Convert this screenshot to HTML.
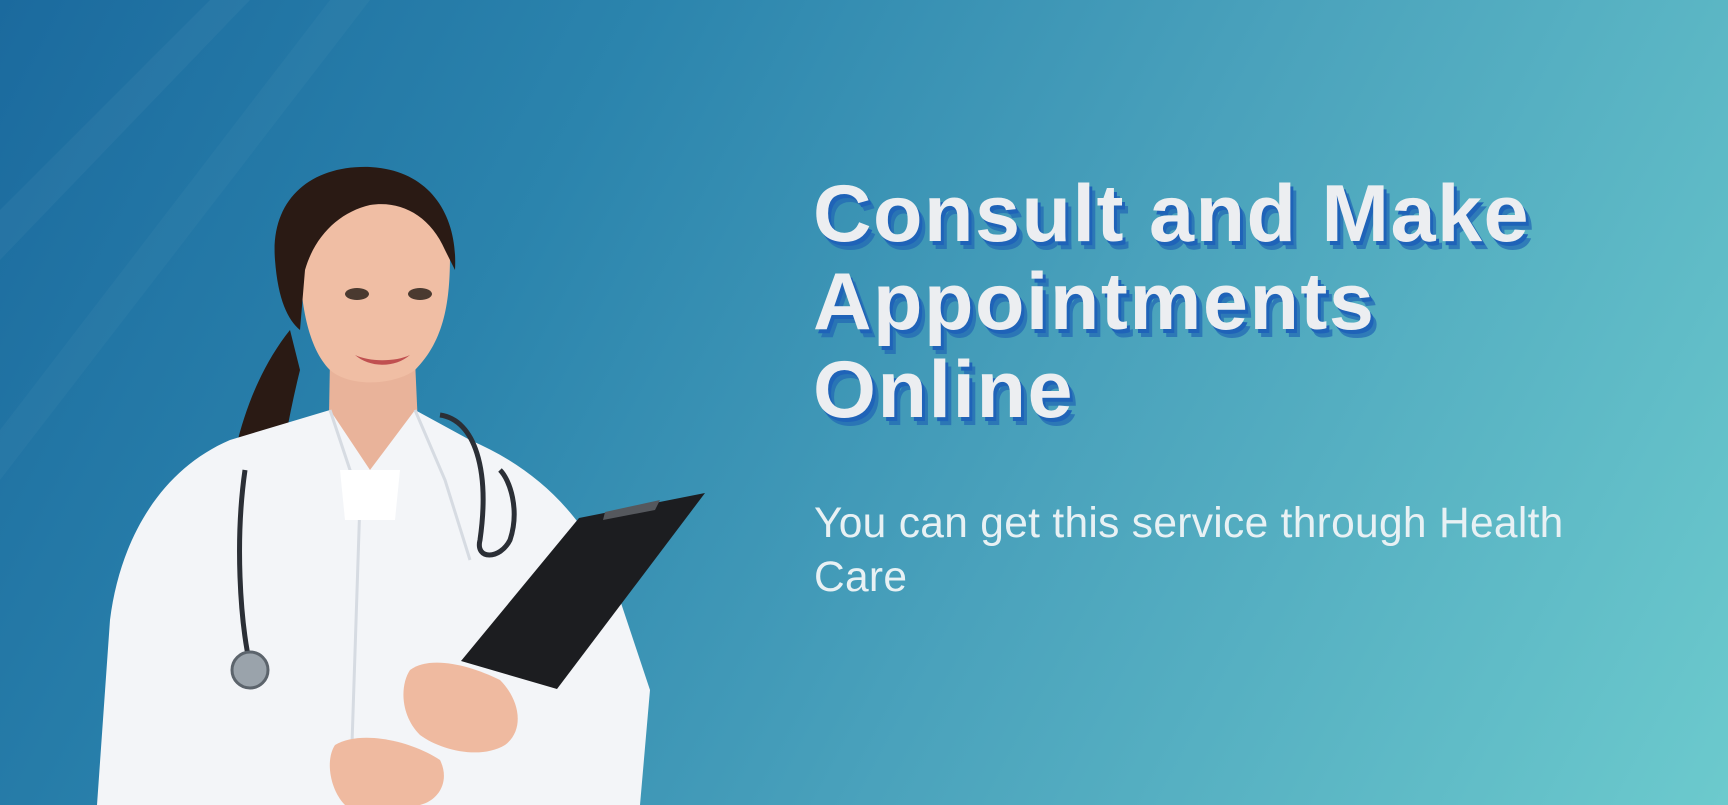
<!DOCTYPE html>
<html><head><meta charset="utf-8"><style>
html,body{margin:0;padding:0}
body{width:1728px;height:805px;overflow:hidden;position:relative;
background:linear-gradient(118deg,#1b6a9e 0%,#2b84ad 30%,#4aa2bc 60%,#6ccacd 100%);font-family:"Liberation Sans",sans-serif}
.h{position:absolute;left:813px;top:170px;font-weight:700;font-size:81px;line-height:88px;color:#eceef1;letter-spacing:1.5px;
text-shadow:3px 4px 0 #1f63b8,6px 8px 0 rgba(35,105,180,0.75)}
.s{position:absolute;left:814px;top:497px;width:820px;font-size:42.5px;line-height:54px;color:#e8f1f4;font-weight:400;letter-spacing:0.3px}
svg{position:absolute;left:0;top:0}
</style></head><body>
<svg width="1728" height="805" viewBox="0 0 1728 805">
<polygon points="0,210 210,0 250,0 0,260" fill="#ffffff" opacity="0.04"/>
<polygon points="0,430 330,0 370,0 0,480" fill="#ffffff" opacity="0.03"/>
<path d="M290,330 C250,380 230,450 225,520 C228,560 245,575 265,565 C275,500 285,430 300,370 Z" fill="#2a1a14"/>
<path d="M330,360 L415,360 L420,470 L328,470 Z" fill="#e9b39a"/>
<path d="M97,805 L110,620 C120,540 160,470 230,440 L330,410 L370,470 L415,410 L470,440 C540,470 590,520 620,600 L650,690 L640,805 Z" fill="#f3f5f8"/>
<path d="M330,410 L360,500 L350,805" stroke="#d6dbe2" stroke-width="3" fill="none"/>
<path d="M415,410 L445,480 L470,560" stroke="#d6dbe2" stroke-width="3" fill="none"/>
<path d="M340,470 L370,470 L400,470 L395,520 L345,520 Z" fill="#ffffff"/>
<path d="M245,470 C235,540 240,620 250,665" stroke="#2b2f36" stroke-width="5" fill="none"/>
<path d="M440,415 C475,420 490,470 480,540 C475,560 500,560 510,540 C520,510 510,480 500,470" stroke="#2b2f36" stroke-width="5" fill="none"/>
<circle cx="250" cy="670" r="18" fill="#9aa3ab" stroke="#5c646c" stroke-width="3"/>
<path d="M300,235 C300,190 340,170 375,172 C420,175 450,205 450,255 C450,300 445,340 415,370 C395,385 350,388 330,370 C305,345 298,290 300,235 Z" fill="#f0bea4"/>
<path d="M275,260 C270,200 310,165 370,167 C430,170 458,215 455,270 L445,250 C430,215 400,200 370,205 C340,212 315,235 305,270 L300,330 C288,320 278,300 275,260 Z" fill="#2a1a14"/>
<ellipse cx="357" cy="294" rx="12" ry="6" fill="#4a3a30"/>
<ellipse cx="420" cy="294" rx="12" ry="6" fill="#4a3a30"/>
<path d="M355,355 C370,368 395,368 410,355 C395,362 370,362 355,355 Z" fill="#c05050"/>
<polygon points="579,518 705,493 557,689 461,661" fill="#1c1d20"/>
<polygon points="605,512 660,500 655,510 603,520" fill="#55585d"/>
<path d="M410,670 C430,655 470,665 500,680 C520,700 525,730 505,745 C480,760 440,750 420,735 C400,715 400,685 410,670 Z" fill="#efbaa0"/>
<path d="M335,745 C360,730 410,740 440,760 C450,780 440,800 420,805 L345,805 C330,790 325,760 335,745 Z" fill="#efbaa0"/>
</svg>
<div class="h">Consult and Make<br>Appointments<br>Online</div>
<div class="s">You can get this service through Health Care</div>
</body></html>
